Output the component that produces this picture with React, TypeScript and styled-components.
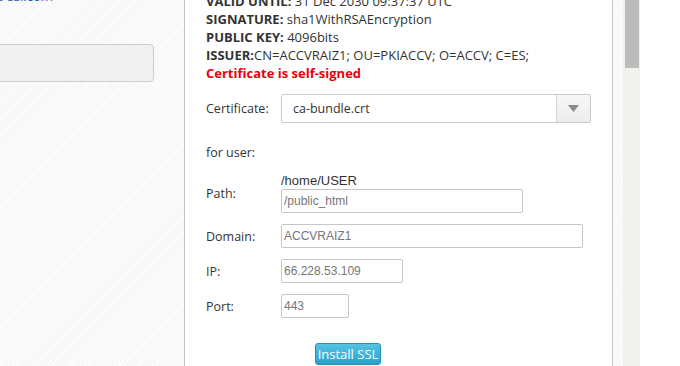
import React from 'react'
import styled, { createGlobalStyle } from 'styled-components'

const GlobalStyle = createGlobalStyle`
  html, body {
    margin: 0;
    padding: 0;
    height: 100%;
    overflow: hidden;
  }
  body {
    background: #fff;
    font-family: 'Open Sans', 'Liberation Sans', sans-serif;
  }
  #root {
    height: 100%;
  }
`

const texture = `
  background-color: #f7f7f7;
  background-image: repeating-linear-gradient(
    135deg,
    rgba(255, 255, 255, 0.9) 0px,
    rgba(255, 255, 255, 0.9) 1px,
    transparent 1px,
    transparent 3px
  );
`

const details = [
  { key: 'VALID UNTIL:', value: ' 31 Dec 2030 09:37:37 UTC' },
  { key: 'SIGNATURE:', value: ' sha1WithRSAEncryption' },
  { key: 'PUBLIC KEY:', value: ' 4096bits' },
  { key: 'ISSUER:', value: 'CN=ACCVRAIZ1; OU=PKIACCV; O=ACCV; C=ES;' },
]

const App = (): JSX.Element => {
  return (
    <>
      <GlobalStyle />
      <Page>
        <LeftPane>
          <DomainLink>as-ssl.com</DomainLink>
          <GreyField />
        </LeftPane>

        <Panel>
          <Info>
            {details.map((d) => (
              <InfoLine key={d.key}>
                <b>{d.key}</b>
                {d.value}
              </InfoLine>
            ))}
            <Warning>Certificate is self-signed</Warning>
          </Info>

          <Row height={29} top={12}>
            <Label>Certificate:</Label>
            <Select>
              <SelectValue>ca-bundle.crt</SelectValue>
              <SelectArrow>
                <svg width="11" height="7" viewBox="0 0 11 7">
                  <path d="M0 0 L11 0 L5.5 7 Z" fill="#8a8a8a" />
                </svg>
              </SelectArrow>
            </Select>
          </Row>

          <ForUser>for user:</ForUser>

          <PathRow>
            <Label>Path:</Label>
            <PathBox>
              <HomeDir>/home/USER</HomeDir>
              <Input width={242} defaultValue="/public_html" />
            </PathBox>
          </PathRow>

          <Row height={24} top={11}>
            <Label>Domain:</Label>
            <Input width={302} defaultValue="ACCVRAIZ1" />
          </Row>

          <Row height={24} top={11}>
            <Label>IP:</Label>
            <Input width={122} defaultValue="66.228.53.109" />
          </Row>

          <Row height={24} top={11}>
            <Label>Port:</Label>
            <Input width={68} defaultValue="443" />
          </Row>

          <ButtonRow>
            <InstallButton>Install SSL</InstallButton>
          </ButtonRow>
        </Panel>

        <Gutter />
        <ScrollTrack>
          <ScrollThumb />
        </ScrollTrack>
        <Rest />
      </Page>
    </>
  )
}

const Page = styled.div`
  display: flex;
  height: 366px;
  width: 680px;
  overflow: hidden;
`

const LeftPane = styled.div`
  ${texture}
  width: 184px;
  flex-shrink: 0;
  display: flex;
  flex-direction: column;
  border-right: 1px solid #c4c4c4;
`

const DomainLink = styled.div`
  font-size: 13px;
  line-height: 16px;
  color: #2a5ea8;
  margin-top: -12px;
  margin-left: -10px;
`

const GreyField = styled.div`
  width: 160px;
  height: 36px;
  margin-top: 40px;
  margin-left: -8px;
  background: #f1f1f1;
  border: 1px solid #cdcdcd;
  border-radius: 4px;
`

const Panel = styled.div`
  width: 428px;
  flex-shrink: 0;
  background: #fff;
  border-right: 1px solid #c4c4c4;
  padding-left: 21px;
  box-sizing: border-box;
  display: flex;
  flex-direction: column;
`

const Info = styled.div`
  margin-top: -8px;
  font-size: 13px;
  line-height: 18px;
  color: #333;

  b {
    font-weight: 700;
  }
`

const InfoLine = styled.div`
  white-space: nowrap;
`

const Warning = styled.div`
  color: #e8000b;
  font-weight: 700;
`

interface RowProps {
  height: number
  top: number
}

const Row = styled.div<RowProps>`
  display: flex;
  align-items: center;
  height: ${(p) => p.height}px;
  margin-top: ${(p) => p.top}px;
`

const Label = styled.div`
  width: 75px;
  flex-shrink: 0;
  font-size: 12.5px;
  color: #333;
`

const Select = styled.div`
  width: 310px;
  height: 29px;
  box-sizing: border-box;
  border: 1px solid #c9c9c9;
  border-radius: 2px;
  display: flex;
  align-items: stretch;
  background: #fff;
`

const SelectValue = styled.div`
  flex: 1;
  display: flex;
  align-items: center;
  padding-left: 11px;
  font-size: 12.5px;
  color: #333;
`

const SelectArrow = styled.div`
  width: 33px;
  border-left: 1px solid #d4d4d4;
  background: linear-gradient(#f7f7f7, #ececec);
  display: flex;
  align-items: center;
  justify-content: center;
`

const ForUser = styled.div`
  margin-top: 21px;
  font-size: 12.5px;
  line-height: 18px;
  color: #333;
`

const PathRow = styled.div`
  display: flex;
  align-items: center;
  margin-top: 11px;
`

const PathBox = styled.div`
  display: flex;
  flex-direction: column;
`

const HomeDir = styled.div`
  font-family: 'Liberation Sans', Arial, sans-serif;
  font-size: 13px;
  line-height: 15px;
  color: #333;
  margin-bottom: 1px;
`

const Input = styled.input<{ width: number }>`
  width: ${(p) => p.width}px;
  height: 24px;
  box-sizing: border-box;
  border: 1px solid #c6c6c6;
  border-radius: 2px;
  padding: 0 2px;
  font-family: 'Liberation Sans', Arial, sans-serif;
  font-size: 12px;
  color: #777;
  background: #fff;
  outline: none;
`

const ButtonRow = styled.div`
  margin-top: 24px;
  padding-left: 109px;
`

const InstallButton = styled.button`
  width: 66px;
  height: 22px;
  padding: 0;
  border: 1px solid #2791b8;
  border-radius: 3px;
  background: linear-gradient(#54c3e3, #2ba2cc);
  color: #fff;
  font-family: 'Open Sans', 'Liberation Sans', sans-serif;
  font-size: 13px;
  line-height: 20px;
  cursor: pointer;
`

const Gutter = styled.div`
  ${texture}
  width: 10px;
  flex-shrink: 0;
`

const ScrollTrack = styled.div`
  width: 17px;
  flex-shrink: 0;
  background: #f0f0ec;
  padding: 0 1px 0 2px;
  box-sizing: border-box;
`

const ScrollThumb = styled.div`
  height: 68px;
  background: #bcbcbc;
`

const Rest = styled.div`
  flex: 1;
  background: #fff;
`

export default App
